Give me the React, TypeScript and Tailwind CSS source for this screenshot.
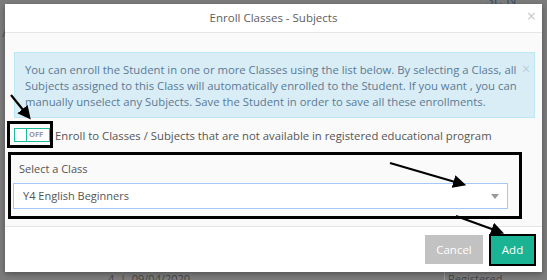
import React from "react";

export default function App() {
  const font = { fontFamily: '"Open Sans", "Noto Sans", sans-serif' };
  return (
    <div className="relative w-[547px] h-[280px] overflow-hidden bg-[#7c7c7c]" style={font}>
      {/* faint background content */}
      <div className="absolute left-[486px] top-[-8px] text-[14px] leading-[16px] text-[#3d4f66]">St. N</div>
      <div className="absolute left-[2px] top-[20px] text-[15px] text-[#5a5a5a]">/</div>
      <div className="absolute left-[108px] top-[273px] text-[11px] text-[#444] leading-none">4 &nbsp;| &nbsp;09/04/2020</div>
      <div className="absolute left-[448px] top-[273px] text-[11px] text-[#444] leading-none">Registered</div>
      <div className="absolute left-[444px] top-[268px] w-px h-[12px] bg-[#999]"></div>

      {/* modal */}
      <div className="absolute left-[5px] top-[4px] w-[537px] h-[268px] bg-[#fafafa] flex flex-col shadow-[0_2px_6px_rgba(0,0,0,0.35)]">
        <div className="h-[29px] shrink-0 bg-white border-b border-[#e5e5e5] flex items-center justify-center relative">
          <span className="text-[11.5px] text-[#5e5e5e]">Enroll Classes - Subjects</span>
          <span className="absolute right-[6px] top-[4px] text-[16px] leading-none text-[#c8c8c8]">×</span>
        </div>
        <div className="flex-1 pl-[9px] pr-[7px] pt-[19px]">
          <div className="relative h-[66px] bg-[#d9edf7] border border-[#bce8f1] pl-[10px] pt-[9px] text-[11.3px] leading-[16px] text-[#5a7a93] whitespace-nowrap">
            You can enroll the Student in one or more Classes using the list below. By selecting a Class, all
            <br />
            Subjects assigned to this Class will automatically enrolled to the Student. If you want , you can
            <br />
            manually unselect any Subjects. Save the Student in order to save all these enrollments.
            <span className="absolute right-[4px] top-[9px] text-[14px] leading-none text-[#b8cfdb]">×</span>
          </div>
          <div className="flex items-center mt-[3px] h-[27px]">
            <div className="ml-[-7px] h-[27px] w-[46px] border-[3px] border-black flex items-center pl-[4px] shrink-0">
              <div className="w-[36px] h-[14px] border border-[#1abc9c] flex bg-white">
                <div className="w-[12px] h-full border-r border-[#1abc9c]"></div>
                <div className="flex-1 text-[7.5px] font-bold leading-[11px] text-[#999] pl-[2px]">OFF</div>
              </div>
            </div>
            <span className="ml-[2px] mt-[3px] text-[11.3px] text-[#555] whitespace-nowrap">
              Enroll to Classes / Subjects that are not available in registered educational program
            </span>
          </div>
          <div className="ml-[-6px] mt-[4px] w-[514px] h-[67px] border-[3px] border-black bg-[#fafafa] pl-[2px] pt-[5px]">
            <div className="text-[11px] text-[#555] leading-[17px] pl-[6px]">Select a Class</div>
            <div className="mt-[6px] w-[495px] h-[26px] bg-white border border-[#a6c8f5] flex items-center pl-[9px] pr-[8px] text-[11px] text-[#555]">
              <span className="flex-1">Y4 English Beginners</span>
              <span className="w-0 h-0 border-l-[4px] border-r-[4px] border-t-[5px] border-l-transparent border-r-transparent border-t-[#999]"></span>
            </div>
          </div>
        </div>
        <div className="h-[46px] shrink-0 border-t border-[#e5e5e5] bg-white flex justify-end items-start pr-[6px] pt-[7px] gap-[6px]">
          <div className="mt-[1px] w-[58px] h-[29px] bg-[#c2c2c2] text-white text-[11.5px] flex items-center justify-center">Cancel</div>
          <div className="w-[47px] h-[32px] border-[2px] border-black bg-[#1ab394] text-white text-[11.5px] flex items-center justify-center">Add</div>
        </div>
      </div>

      {/* annotation arrows */}
      <svg className="absolute left-0 top-0" width="547" height="280">
        <defs>
          <marker id="ah" markerWidth="6" markerHeight="6" refX="4" refY="3" orient="auto" markerUnits="strokeWidth">
            <path d="M0,0 L6,3 L0,6 z" fill="#000" />
          </marker>
        </defs>
        <line x1="11" y1="95" x2="28" y2="116" stroke="#000" strokeWidth="2.2" markerEnd="url(#ah)" />
        <line x1="390" y1="163" x2="462" y2="184" stroke="#000" strokeWidth="2.2" markerEnd="url(#ah)" />
        <line x1="456" y1="216" x2="500" y2="232" stroke="#000" strokeWidth="2.2" markerEnd="url(#ah)" />
      </svg>
    </div>
  );
}
